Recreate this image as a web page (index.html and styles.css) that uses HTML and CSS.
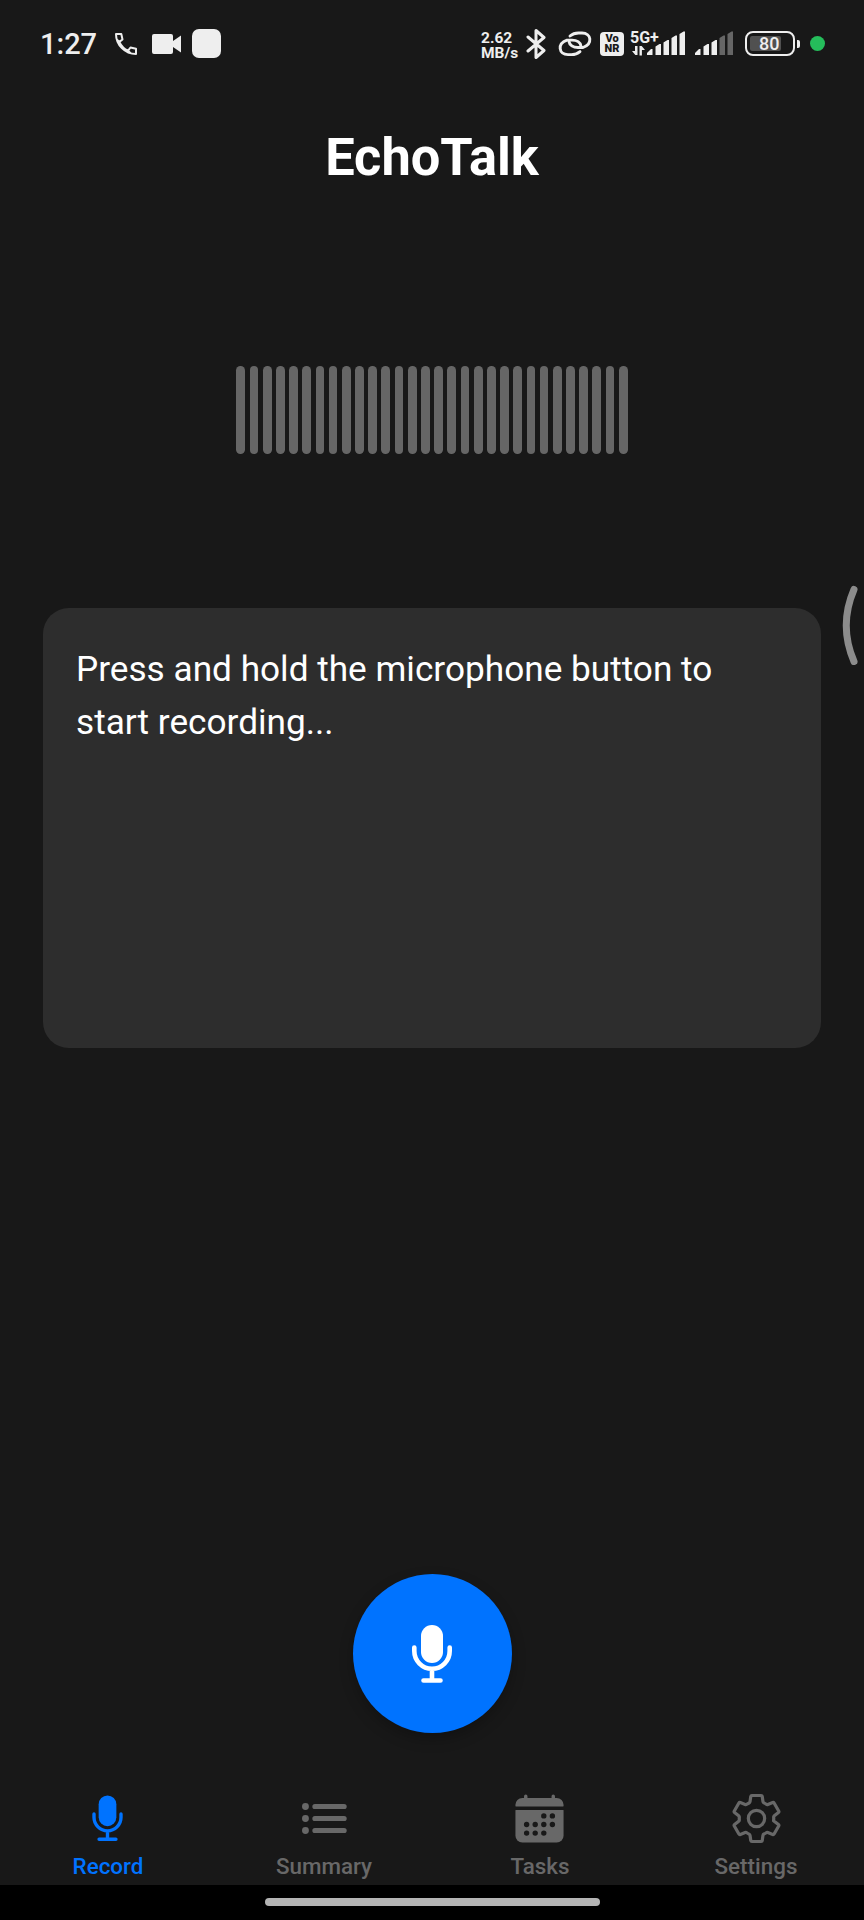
FILE: index.html
```html
<!DOCTYPE html>
<html lang="en">
<head>
<meta charset="utf-8">
<title>EchoTalk</title>
<link rel="stylesheet" href="styles.css">
</head>
<body>
<div class="app">
  <header class="status">
    <span class="time">1:27</span>
    <svg class="phone" width="24" height="24" viewBox="0 0 24 24" fill="none" stroke="#eee" stroke-width="2" stroke-linejoin="round"><path d="M2 2h5.300l1.200 5.500-3.200 2.400q3 6.200 8.800 8.800l2.400-3.200 5.500 1.200V22C11 22 2 13 2 2zM5.300 9.900 2.800 7.500M14.100 18.700l2.400 2.500"/></svg>
    <svg class="video" width="30" height="20" viewBox="0 0 30 20" fill="#eee"><path d="M2 0h17q2 0 2 2v5l8-5.500v17L21 13v5q0 2-2 2H2q-2 0-2-2V2q0-2 2-2z"/></svg>
    <span class="square"></span>
    <span class="speed"><span>2.62</span><span>MB/s</span></span>
    <svg class="bt" width="21" height="32" viewBox="0 0 21 32" fill="none" stroke="#eee" stroke-width="3" stroke-linejoin="round" stroke-linecap="round"><path d="M2 9l16 13.500L10 29.500V2.500L18 9.500 2 23"/></svg>
    <svg class="link" width="34" height="26" viewBox="0 0 34 26" fill="none" stroke="#eee" stroke-width="2.900" stroke-linecap="round"><path id="ring" d="M12 5Q15.500 2 20.500 2H24C33.500 2 35 13 25 16.500H20C15 16.500 11.500 14 11 10.500"/><use href="#ring" transform="rotate(180 17 12.800)"/></svg>
    <span class="vonr"><span>Vo</span><span>NR</span></span>
    <div class="cell">
      <span class="net">5G+</span>
      <svg class="arrows" width="13" height="10" viewBox="0 0 13 10" fill="#eee"><path d="M5.500 0v9H3.300L0 5h3V0zM7.500 9.500V0h2.200L13 4H9.900v5.500z"/></svg>
    </div>
    <svg class="sig one" width="39" height="25" viewBox="0 0 39 25" fill="#eee"><path d="M0 24v-2l4-4h1.500v6zM8.500 24V15.500l4-2.500h1.500V24zM16.500 24V11.500l4-2.500h1.500V24zM24.500 24V7l4-2.500h1.500V24zM32.500 24V3l4-2.500h1.500V24z"/></svg>
    <svg class="sig two" width="39" height="25" viewBox="0 0 39 25" fill="#eee"><path d="M0 24v-2l4-4h1.500v6zM8.500 24V15.500l4-2.500h1.500V24zM16.500 24V11.500l4-2.500h1.500V24z"/><path fill="#666" d="M24.500 24V7l4-2.500h1.500V24zM32.500 24V3l4-2.500h1.500V24z"/></svg>
    <span class="battery"><span class="charge">80</span></span>
    <span class="tip"></span>
    <span class="dot"></span>
  </header>

  <h1 class="title">EchoTalk</h1>

  <div class="wave">
    <i></i><i></i><i></i><i></i><i></i><i></i><i></i><i></i><i></i><i></i>
    <i></i><i></i><i></i><i></i><i></i><i></i><i></i><i></i><i></i><i></i>
    <i></i><i></i><i></i><i></i><i></i><i></i><i></i><i></i><i></i><i></i>
  </div>

  <main class="card">Press and hold the microphone button to start recording...</main>

  <div class="action">
    <button class="mic" aria-label="Record">
      <svg width="40" height="58" viewBox="0 0 40 58" fill="none" stroke="#fff" stroke-width="4.600" stroke-linecap="round"><rect x="9" y="0" width="22" height="38" rx="11" fill="#fff" stroke="none"/><path d="M2.300 22.500V26a17.700 17.700 0 0035.400 0V22.500M20 44v11M11.500 55.500h17"/></svg>
    </button>
  </div>

  <nav class="tabs">
    <a class="tab active">
      <svg viewBox="0 0 512 512" fill="none" stroke="currentColor" stroke-width="32" stroke-linecap="round"><path d="M176 448h160M384 208v32c0 70.400-57.600 128-128 128s-128-57.600-128-128v-32M256 368v80"/><rect x="172" y="32" width="168" height="292" rx="84" fill="currentColor" stroke="none"/></svg>
      <span>Record</span>
    </a>
    <a class="tab">
      <svg viewBox="0 0 512 512" fill="none" stroke="currentColor" stroke-width="48" stroke-linecap="round"><path d="M176 144h272M176 256h272M176 368h272"/><g fill="currentColor" stroke-width="32"><circle cx="88" cy="144" r="16"/><circle cx="88" cy="256" r="16"/><circle cx="88" cy="368" r="16"/></g></svg>
      <span>Summary</span>
    </a>
    <a class="tab">
      <svg viewBox="0 0 512 512" fill="currentColor"><path d="M480 128a64 64 0 00-64-64h-16V48a16 16 0 00-32 0v16H144V48a16 16 0 00-32 0v16H96a64 64 0 00-64 64v12a4 4 0 004 4h440a4 4 0 004-4z"/><path d="M32 416a64 64 0 0064 64h320a64 64 0 0064-64V179a3 3 0 00-3-3H35a3 3 0 00-3 3z"/><g fill="#181818"><circle cx="296" cy="232" r="25"/><circle cx="376" cy="232" r="25"/><circle cx="136" cy="312" r="25"/><circle cx="216" cy="312" r="25"/><circle cx="296" cy="312" r="25"/><circle cx="376" cy="312" r="25"/><circle cx="136" cy="392" r="25"/><circle cx="216" cy="392" r="25"/><circle cx="296" cy="392" r="25"/></g></svg>
      <span>Tasks</span>
    </a>
    <a class="tab">
      <svg viewBox="0 0 512 512" fill="none" stroke="currentColor" stroke-width="30" stroke-linejoin="round"><circle cx="256" cy="256" r="76"/><path d="M416.390 256a154.340 154.340 0 01-1.530 20.790l45.210 35.460a10.810 10.810 0 012.450 13.750l-42.770 74a10.810 10.810 0 01-13.140 4.590l-44.900-18.080a16.110 16.110 0 00-15.170 1.750A164.480 164.480 0 01325 400.800a15.940 15.940 0 00-8.820 12.140l-6.730 47.890a11.080 11.080 0 01-10.680 9.170h-85.540a11.110 11.110 0 01-10.690-8.870l-6.720-47.820a16.070 16.070 0 00-9-12.220 155.300 155.300 0 01-21.460-12.570 16 16 0 00-15.110-1.710l-44.890 18.070a10.810 10.810 0 01-13.140-4.580l-42.770-74a10.800 10.800 0 012.450-13.750l38.210-30a16.050 16.050 0 006-14.080c-.360-4.170-.580-8.330-.580-12.500s.210-8.270.580-12.350a16 16 0 00-6.070-13.940l-38.190-30A10.810 10.810 0 0149.480 186l42.770-74a10.810 10.810 0 0113.140-4.590l44.900 18.080a16.110 16.110 0 0015.170-1.750A164.480 164.480 0 01187 111.200a15.940 15.940 0 008.820-12.140l6.730-47.890A11.080 11.080 0 01213.230 42h85.540a11.110 11.110 0 0110.690 8.870l6.720 47.820a16.070 16.070 0 009 12.220 155.300 155.300 0 0121.460 12.570 16 16 0 0015.110 1.710l44.890-18.070a10.810 10.810 0 0113.140 4.580l42.770 74a10.800 10.800 0 01-2.450 13.750l-38.210 30a16.050 16.050 0 00-6.050 14.080c.330 4.140.550 8.300.550 12.470z"/></svg>
      <span>Settings</span>
    </a>
  </nav>

  <footer class="home"><span class="handle"></span></footer>

  <svg class="edge" width="18" height="80" viewBox="0 0 18 80" fill="none" stroke="#8c8c8c" stroke-width="7" stroke-linecap="round"><path d="M12 4.500Q-3.500 40.500 12 76.500"/></svg>
</div>
</body>
</html>
```

FILE: styles.css
```css
* { box-sizing: border-box; }

body {
  margin: 0;
  background: #181818;
  color: #fff;
  font-family: Roboto, sans-serif;
}

.app {
  position: relative;
  width: 864px;
  height: 1920px;
  display: flex;
  flex-direction: column;
}

/* Status bar */
.status {
  height: 87px;
  flex: none;
  display: flex;
  align-items: center;
  padding-left: 40px;
  color: #eee;
}
.status > * { flex: none; }
.time { width: 74px; font-size: 29px; font-weight: 500; }
.phone { margin-right: 14px; }
.video { margin-right: 10px; }
.square { width: 29px; height: 29px; border-radius: 7px; background: #eee; }
.speed {
  width: 45px;
  margin-left: 260px;
  display: flex;
  flex-direction: column;
  font-size: 15.500px;
  line-height: 15px;
  font-weight: 700;
  padding-top: 4px;
}
.link { margin-left: 11px; }
.vonr {
  width: 24px;
  height: 24px;
  margin-left: 8px;
  border-radius: 4px;
  background: #eee;
  color: #181818;
  font-size: 11px;
  line-height: 10px;
  font-weight: 900;
  display: flex;
  flex-direction: column;
  align-items: center;
  justify-content: center;
}
.cell { width: 17px; margin-left: 6px; height: 30px; display: flex; flex-direction: column; justify-content: space-between; }
.net { font-size: 16px; line-height: 17px; font-weight: 700; white-space: nowrap; }
.arrows { margin: 0 0 3px 2px; }
.sig.two { margin-left: 9px; }
.battery {
  width: 50px;
  height: 25px;
  margin-left: 11px;
  padding: 3px;
  border: 2.500px solid #eee;
  border-radius: 8px;
}
.charge {
  display: block;
  width: 31px;
  height: 15px;
  padding-left: 9px;
  border-radius: 2px;
  background: #505050;
  font-size: 18px;
  line-height: 16px;
  font-weight: 500;
}
.tip { width: 3px; height: 8px; margin-left: 2px; border-radius: 0 2px 2px 0; background: #eee; }
.dot { width: 15px; height: 15px; margin-left: 10px; border-radius: 50%; background: #25bd5b; }

.title {
  margin: 39px 0 0;
  height: 62px;
  font-size: 52.400px;
  line-height: 62px;
  font-weight: 700;
  text-align: center;
}

/* Sound level bars */
.wave {
  display: flex;
  justify-content: center;
  gap: 4.400px;
  margin-top: 178px;
}
.wave i { width: 8.800px; height: 88px; border-radius: 4.400px; background: #666; }

.card {
  height: 440px;
  margin: 154px 43px 0 43px;
  padding: 35px 33px;
  border-radius: 26px;
  background: #2d2d2d;
  font-size: 35.200px;
  line-height: 52.800px;
}

.action { display: flex; justify-content: center; margin-top: 526px; }
.mic {
  width: 159px;
  height: 159px;
  padding: 0;
  border: 0;
  border-radius: 50%;
  background: #0073ff;
  box-shadow: 0 6px 14px rgba(0, 0, 0, 0.25);
  display: flex;
  align-items: center;
  justify-content: center;
}

/* Bottom navigation */
.tabs {
  display: grid;
  grid-template-columns: repeat(4, 1fr);
  margin-top: auto;
  height: 94px;
  flex: none;
  color: #686868;
}
.tab { display: flex; flex-direction: column; align-items: center; }
.tab svg { width: 55px; height: 55px; margin-right: 2px; }
.tab:first-child svg { padding-top: 1px; }
.tab:last-child svg { margin-right: 0; }
.tab span { font-size: 22.400px; line-height: 26px; margin-top: 7px; font-weight: 500; }
.active { color: #0073ff; }

.home {
  height: 35px;
  flex: none;
  background: #000;
  display: flex;
  justify-content: center;
  padding-top: 13px;
}
.handle { width: 335px; height: 8px; border-radius: 4px; background: #b4b4b4; }

/* Back gesture handle drawn over the screen edge */
.edge { position: absolute; left: 842px; top: 585px; }
```
